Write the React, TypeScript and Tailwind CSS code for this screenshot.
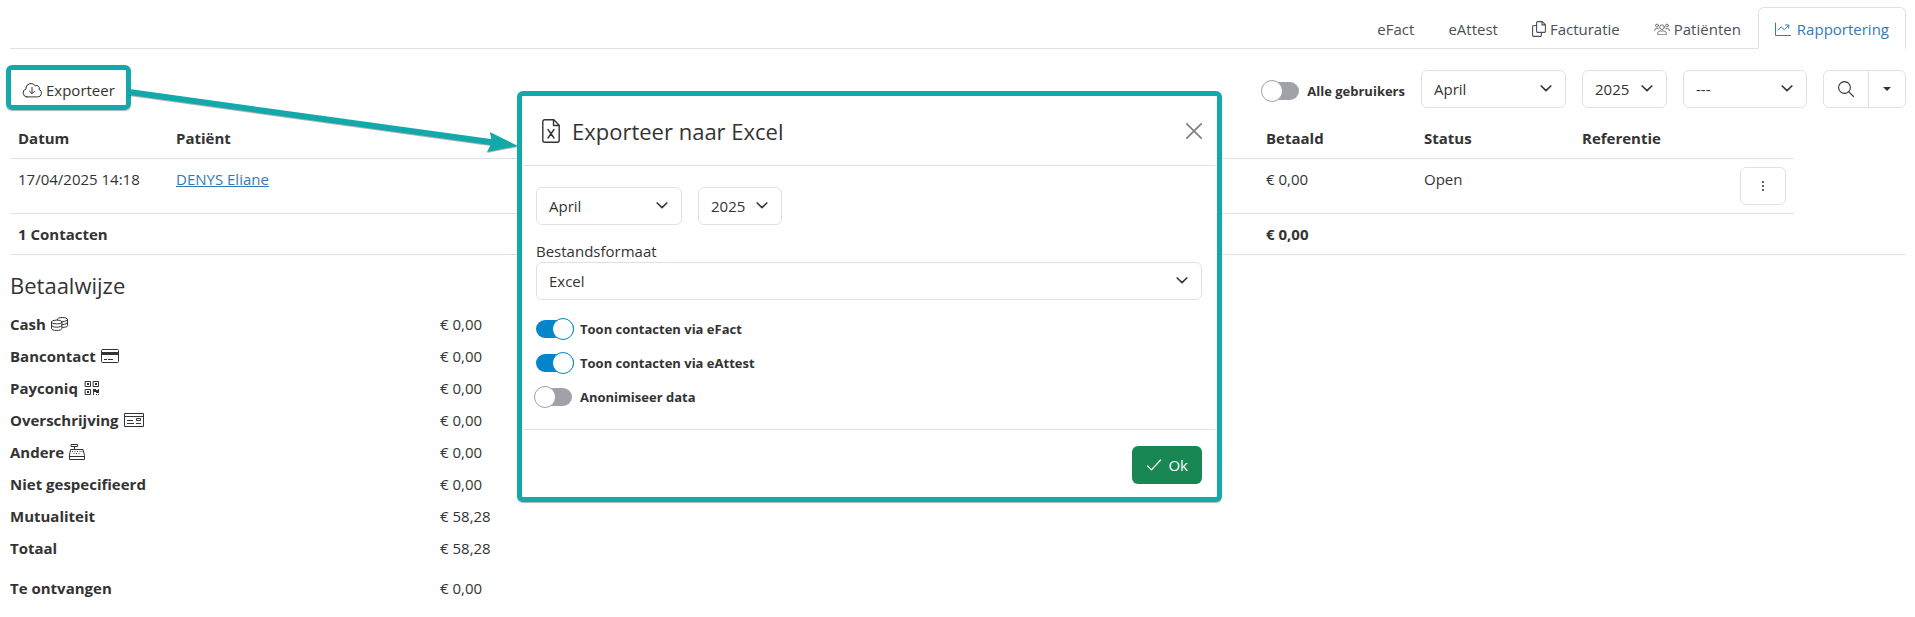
import { useState } from 'react';
import type { ReactNode, SVGProps } from 'react';
import clsx from 'clsx';

/* ---------- icons ---------- */

function Icon({ children, ...props }: SVGProps<SVGSVGElement>) {
  return (
    <svg
      fill="none"
      stroke="currentColor"
      strokeLinecap="round"
      strokeLinejoin="round"
      aria-hidden="true"
      {...props}
    >
      {children}
    </svg>
  );
}

const CloudIcon = () => (
  <Icon viewBox="0 0 20 16" className="h-4 w-5 shrink-0">
    <path d="M4.8 14.9h10.8a3.9 3.9 0 0 0 1.5-7.5 2.8 2.8 0 0 0-3.9-3.6A5 5 0 0 0 4 6v.9a4.1 4.1 0 0 0 .8 8Z" />
    <path d="M10 5.500v6M7.500 9.200l2.500 2.500 2.500-2.500" />
  </Icon>
);

const CopyIcon = () => (
  <Icon viewBox="0 0 14 16" className="h-4 w-3.5 shrink-0" strokeWidth="1.1">
    <path d="M10.3.6H5.8a1.200 1.200 0 0 0-1.200 1.200v8.400a1.200 1.200 0 0 0 1.200 1.200h6.400a1.200 1.200 0 0 0 1.200-1.200V3.700zM10 .8v3.100h3.200" />
    <path d="M4.300 4.500H1.800A1.200 1.200 0 0 0 .6 5.700v8.500a1.200 1.200 0 0 0 1.200 1.200h6.400a1.200 1.200 0 0 0 1.200-1.200v-2.500" />
  </Icon>
);

const UsersIcon = () => (
  <Icon viewBox="0 0 18 14" strokeWidth="0.9" className="h-3 w-4 shrink-0">
    <circle cx="9" cy="4.800" r="2.700" />
    <circle cx="3.200" cy="3" r="1.700" />
    <circle cx="14.800" cy="3" r="1.700" />
    <path d="M4 13.300v-1.200a2.900 2.900 0 0 1 2.900-2.800h4.200a2.900 2.900 0 0 1 2.900 2.800v1.200zM.5 8.800V8.200a1.700 1.700 0 0 1 1.700-1.600h2.400M17.500 8.800v-.6a1.700 1.700 0 0 0-1.700-1.600h-2.400" />
  </Icon>
);

const ChartIcon = () => (
  <Icon viewBox="0 0 16 14" className="h-3.5 w-4 shrink-0">
    <path d="M.5 1v12.500h15M3.200 8l3-3.200 3.200 3 4-4.200M10.600 3h3.200v3.200" />
  </Icon>
);

const FileExcelIcon = () => (
  <Icon viewBox="0 0 18 24" strokeWidth="1.400" className="h-6 w-[18px] shrink-0">
    <path d="M11.800.8H2.700A1.900 1.900 0 0 0 .8 2.700v18.600a1.900 1.900 0 0 0 1.900 1.900h12.600a1.900 1.900 0 0 0 1.900-1.900V6.200zM11.500 1v5.500H17M6 10.500l6 8.500M12 10.500L6 19" />
  </Icon>
);

const SearchIcon = () => (
  <Icon viewBox="0 0 16 16" strokeWidth="1.100" className="size-4">
    <circle cx="6.500" cy="6.500" r="5.900" />
    <path d="m10.900 10.900 4.600 4.600" />
  </Icon>
);

const CoinsIcon = () => (
  <Icon viewBox="0 0 17 14" className="h-3.5 w-[17px]">
    <ellipse cx="5.700" cy="5" rx="5.200" ry="1.900" />
    <path d="M.5 5v6.500c0 1.100 2.300 2 5.200 2s5.200-.9 5.200-2V5M.5 8.200c0 1.100 2.300 2 5.200 2s5.200-.9 5.200-2" />
    <path d="M6 2.800C6 1.500 8.200.5 11.200.5s5.300.9 5.300 2-2 1.900-4.900 2M16.500 2.500v6.200c0 .9-1.900 1.600-4.800 1.800M16.500 5.500c0 1.100-2 1.900-4.900 2" />
  </Icon>
);

const CardIcon = () => (
  <Icon viewBox="0 0 18 14" className="h-3.5 w-[18px]">
    <rect x=".5" y=".5" width="17" height="13" rx="1" />
    <path fill="currentColor" stroke="none" d="M0 3h18v3H0z" />
    <path strokeLinecap="butt" d="M3 10.500h3M7 10.500h5" />
  </Icon>
);

const QrIcon = () => (
  <Icon viewBox="-2 0 16 14" className="h-3.5 w-4" strokeLinejoin="miter">
    <path d="M.5.5h5v5h-5zM8.500.5h5v5h-5zM.5 8.500h5v5h-5z" />
    <path
      fill="currentColor"
      stroke="none"
      d="M2 2h2v2H2zM10 2h2v2h-2zM2 10h2v2H2zM8 8h3v1h2V8h1v4h-3v-1H9v3H8zM11 13h1v1h-1zM13 13h1v1h-1z"
    />
  </Icon>
);

const ChequeIcon = () => (
  <Icon viewBox="0 0 20 14" className="h-3.5 w-5" strokeLinejoin="miter" strokeLinecap="butt">
    <path d="M.5.5h19v13H.5zM.5 3.500h19M3 7.500h6M3 10.500h7M12.500 5.500h4v2h-4zM12 10.500h5" />
  </Icon>
);

const RegisterIcon = () => (
  <Icon viewBox="0 0 16 16" className="size-4" strokeLinejoin="miter">
    <path d="M2.500.5h6v2h-6zM5.500 2.500v3M2 5.500h12l1.500 6v4H.5v-4zM.5 12.500h15" />
    <path
      strokeLinecap="butt"
      strokeWidth="0.900"
      d="M3 7.500h1M5.500 7.500h1M8 7.500h1M10.500 7.500h1M12.500 7.500h1M4.500 9.500h1M7 9.500h1M9.500 9.500h1"
    />
  </Icon>
);

const ChevronIcon = () => (
  <Icon
    viewBox="0 0 12 7"
    strokeWidth="1.700"
    className="pointer-events-none absolute top-[15px] right-3.5 h-[7px] w-3 text-[#343a40]"
  >
    <path d="m1.200 1 4.800 4.700L10.800 1" />
  </Icon>
);

/* ---------- form parts ---------- */

interface SelectProps {
  label: string;
  options: string[];
  className?: string;
  id?: string;
}

function Select({ label, options, className, id }: SelectProps) {
  return (
    <div className={clsx('relative', className)}>
      <select
        id={id}
        aria-label={label}
        className="block h-[38px] w-full appearance-none rounded-md border border-[#dee2e6] bg-white pr-8 pl-3 text-[15px] leading-6"
      >
        {options.map((o) => (
          <option key={o}>{o}</option>
        ))}
      </select>
      <ChevronIcon />
    </div>
  );
}

interface ToggleProps {
  label: string;
  defaultChecked?: boolean;
}

function Toggle({ label, defaultChecked = false }: ToggleProps) {
  const [on, setOn] = useState(defaultChecked);
  return (
    <label className="flex items-center gap-1.5 text-[13px] leading-5 font-bold">
      {/* the knob overhangs the left end of the track when off */}
      <span
        className={clsx(
          'flex h-[18px] w-[38px] items-center rounded-full',
          on
            ? 'justify-end bg-[#0485cb]'
            : 'mr-0.5 -ml-0.5 bg-[linear-gradient(90deg,transparent_6px,#a1a1aa_6px)]',
        )}
      >
        <input
          type="checkbox"
          checked={on}
          onChange={(e) => setOn(e.target.checked)}
          className={clsx(
            'size-[22px] shrink-0 appearance-none rounded-full border bg-white',
            on ? 'border-[#0485cb]' : 'border-[#a1a1aa]',
          )}
        />
      </span>
      {label}
    </label>
  );
}

/* ---------- data ---------- */

interface Tab {
  label: string;
  icon?: ReactNode;
  active?: boolean;
}

const TABS: Tab[] = [
  { label: 'eFact' },
  { label: 'eAttest' },
  { label: 'Facturatie', icon: <CopyIcon /> },
  { label: 'Patiënten', icon: <UsersIcon /> },
  { label: 'Rapportering', icon: <ChartIcon />, active: true },
];

const PAYMENTS: { label: string; icon?: ReactNode; amount: string }[] = [
  { label: 'Cash', icon: <CoinsIcon />, amount: '€ 0,00' },
  { label: 'Bancontact', icon: <CardIcon />, amount: '€ 0,00' },
  { label: 'Payconiq', icon: <QrIcon />, amount: '€ 0,00' },
  { label: 'Overschrijving', icon: <ChequeIcon />, amount: '€ 0,00' },
  { label: 'Andere', icon: <RegisterIcon />, amount: '€ 0,00' },
  { label: 'Niet gespecifieerd', amount: '€ 0,00' },
  { label: 'Mutualiteit', amount: '€ 58,28' },
  { label: 'Totaal', amount: '€ 58,28' },
];

/* ---------- sections ---------- */

function TabBar() {
  return (
    <nav className="mr-[9px] ml-2.5 flex justify-end border-b border-[#dee2e6] pt-[7px]">
      {TABS.map((tab) => (
        <a
          key={tab.label}
          href="#"
          className={clsx(
            '-mb-px flex items-center rounded-t-md border pt-[9px] pb-[7px] leading-6',
            tab.active
              ? 'gap-1.5 border-[#dee2e6] border-b-white bg-white px-4 text-[#337ab7]'
              : 'gap-1 border-transparent px-4 text-[#495057]',
          )}
        >
          {tab.icon}
          {tab.label}
        </a>
      ))}
    </nav>
  );
}

function Toolbar() {
  return (
    <div className="flex items-start justify-between pt-4 pr-[9px] pl-1.5">
      <button
        type="button"
        className="flex h-[45px] items-center gap-1 rounded-md border-[5px] border-[#13a9ab] px-[11px] pt-1 shadow-[0_1px_1px_rgba(0,0,0,0.3)]"
      >
        <CloudIcon />
        Exporteer
      </button>
      <div className="flex items-center gap-4 pt-[5px]">
        <div className="pt-1">
          <Toggle label="Alle gebruikers" />
        </div>
        <Select label="Maand" options={['April']} className="w-[145px]" />
        <Select label="Jaar" options={['2025']} className="w-[85px]" />
        <Select label="Filter" options={['---']} className="w-[124px]" />
        <div className="flex h-[38px] w-[83px] rounded-md border border-[#dee2e6]">
          <button type="button" aria-label="Zoeken" className="grid flex-1 place-items-center">
            <SearchIcon />
          </button>
          <button
            type="button"
            aria-label="Meer opties"
            className="grid w-[37px] place-items-center border-l border-[#dee2e6]"
          >
            <svg viewBox="0 0 8 4" className="h-1 w-2" fill="currentColor" aria-hidden="true">
              <path d="M0 0h8L4 4z" />
            </svg>
          </button>
        </div>
      </div>
    </div>
  );
}

function ContactsTable() {
  const line = 'border-b border-[#dee2e6] p-2 align-top';
  return (
    <div className="mt-2 mr-[9px] ml-2.5">
      <table className="w-full table-fixed border-collapse text-left leading-6">
        <colgroup>
          <col className="w-[158px]" />
          <col />
          <col className="w-[158px]" />
          <col className="w-[158px]" />
          <col className="w-[220px]" />
          <col className="w-28" />
        </colgroup>
        <thead>
          <tr>
            <th className={line}>Datum</th>
            <th className={line}>Patiënt</th>
            <th className={line}>Betaald</th>
            <th className={line}>Status</th>
            <th className={line}>Referentie</th>
          </tr>
        </thead>
        <tbody>
          <tr>
            <td className={line}>17/04/2025 14:18</td>
            <td className={line}>
              <a href="#" className="text-[#337ab7] underline">
                DENYS Eliane
              </a>
            </td>
            <td className={line}>€ 0,00</td>
            <td className={line}>Open</td>
            <td className={line}>
              <button
                type="button"
                aria-label="Acties"
                className="ml-auto grid h-[38px] w-[46px] place-items-center rounded-md border border-[#dee2e6]"
              >
                <svg viewBox="0 0 2 10" className="h-2.5 w-0.5" fill="currentColor" aria-hidden="true">
                  <path d="M0 .2h2v1.500H0zM0 4.200h2v1.500H0zM0 8.200h2v1.500H0z" />
                </svg>
              </button>
            </td>
          </tr>
        </tbody>
        <tfoot>
          <tr className="font-bold">
            <td className={line} colSpan={2}>
              1 Contacten
            </td>
            <td className={line}>€ 0,00</td>
            <td className={line} colSpan={3} />
          </tr>
        </tfoot>
      </table>
    </div>
  );
}

function PaymentSummary() {
  return (
    <section className="mx-2.5 mt-[15px]">
      <h2 className="text-[22px] leading-[30px]">Betaalwijze</h2>
      <dl className="mt-2">
        {PAYMENTS.map((p) => (
          <div key={p.label} className="flex h-8 items-center">
            <dt className="flex w-[430px] items-center gap-[5px] font-bold">
              {p.label}
              {p.icon}
            </dt>
            <dd>{p.amount}</dd>
          </div>
        ))}
        <div className="mt-2 flex h-8 items-center">
          <dt className="w-[430px] font-bold">Te ontvangen</dt>
          <dd>€ 0,00</dd>
        </div>
      </dl>
    </section>
  );
}

function ExportDialog() {
  return (
    <div
      role="dialog"
      aria-labelledby="export-title"
      className="absolute top-[91px] left-[517px] w-[705px] rounded-md border-[5px] border-[#13a9ab] bg-white px-0.5 shadow-[0_1px_1px_rgba(0,0,0,0.3)]"
    >
      <header className="flex h-[70px] items-center gap-3 border-b border-[#dee2e6] pr-[13px] pl-[18px]">
        <FileExcelIcon />
        <h1 id="export-title" className="flex-1 text-[22px] leading-[30px]">
          Exporteer naar Excel
        </h1>
        <button type="button" aria-label="Sluiten" className="text-[#808080]">
          <Icon viewBox="0 0 16 16" className="size-4" strokeWidth="1.700">
            <path d="m.8.8 14.400 14.400M15.200.8.8 15.200" />
          </Icon>
        </button>
      </header>

      <div className="pt-[21px] pr-[13px] pb-[22px] pl-3">
        <div className="flex gap-4">
          <Select label="Maand" options={['April']} className="w-[146px]" />
          <Select label="Jaar" options={['2025']} className="w-[84px]" />
        </div>
        <label htmlFor="format" className="mt-[15px] block leading-[22px]">
          Bestandsformaat
        </label>
        <Select id="format" label="Bestandsformaat" options={['Excel']} />
        <div className="mt-[19px] flex flex-col items-start gap-3.5">
          <Toggle label="Toon contacten via eFact" defaultChecked />
          <Toggle label="Toon contacten via eAttest" defaultChecked />
          <Toggle label="Anonimiseer data" />
        </div>
      </div>

      <footer className="flex justify-end border-t border-[#dee2e6] pt-4 pr-[13px] pb-[13px] pl-3">
        <button
          type="button"
          className="flex h-[38px] items-center gap-1.5 rounded-md bg-[#198754] px-3.5 text-white"
        >
          <Icon viewBox="0 0 16 12" strokeWidth="1.200" className="h-3 w-4">
            <path d="m1.500 6.800 4 4L14.500 1" />
          </Icon>
          Ok
        </button>
      </footer>
    </div>
  );
}

/* Arrow leading from the export button to the dialog. */
function Pointer() {
  return (
    <svg
      viewBox="0 0 390 64"
      className="pointer-events-none absolute top-[88px] left-[129px] h-16 w-[390px] drop-shadow-[0_1px_0_rgba(0,0,0,0.3)]"
      aria-hidden="true"
    >
      <path d="M0 4 365 54.500" stroke="#13a9ab" strokeWidth="6" />
      <path d="M389 58 361 44l2 10-5 10z" fill="#13a9ab" />
    </svg>
  );
}

export default function App() {
  return (
    <div className="relative bg-white pb-3 font-['Open_Sans','Noto_Sans',sans-serif] text-[15px] leading-6 text-[#333]">
      <TabBar />
      <Toolbar />
      <ContactsTable />
      <PaymentSummary />
      <Pointer />
      <ExportDialog />
    </div>
  );
}
